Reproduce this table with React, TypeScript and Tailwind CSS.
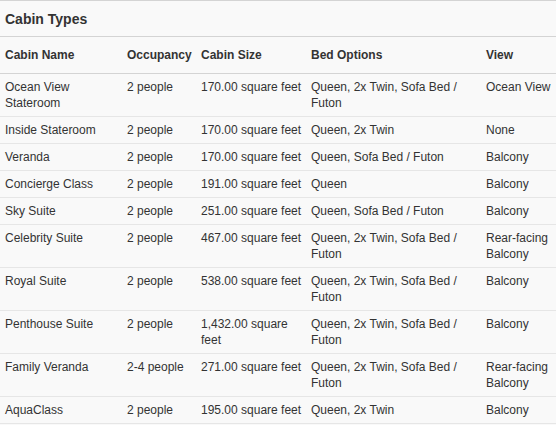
const cabins = [
  { name: "Ocean View Stateroom", occupancy: "2 people", size: "170.00 square feet", beds: "Queen, 2x Twin, Sofa Bed / Futon", view: "Ocean View" },
  { name: "Inside Stateroom", occupancy: "2 people", size: "170.00 square feet", beds: "Queen, 2x Twin", view: "None" },
  { name: "Veranda", occupancy: "2 people", size: "170.00 square feet", beds: "Queen, Sofa Bed / Futon", view: "Balcony" },
  { name: "Concierge Class", occupancy: "2 people", size: "191.00 square feet", beds: "Queen", view: "Balcony" },
  { name: "Sky Suite", occupancy: "2 people", size: "251.00 square feet", beds: "Queen, Sofa Bed / Futon", view: "Balcony" },
  { name: "Celebrity Suite", occupancy: "2 people", size: "467.00 square feet", beds: "Queen, 2x Twin, Sofa Bed / Futon", view: "Rear-facing Balcony" },
  { name: "Royal Suite", occupancy: "2 people", size: "538.00 square feet", beds: "Queen, 2x Twin, Sofa Bed / Futon", view: "Balcony" },
  { name: "Penthouse Suite", occupancy: "2 people", size: "1,432.00 square feet", beds: "Queen, 2x Twin, Sofa Bed / Futon", view: "Balcony" },
  { name: "Family Veranda", occupancy: "2-4 people", size: "271.00 square feet", beds: "Queen, 2x Twin, Sofa Bed / Futon", view: "Rear-facing Balcony" },
  { name: "AquaClass", occupancy: "2 people", size: "195.00 square feet", beds: "Queen, 2x Twin", view: "Balcony" },
];

export default function App() {
  return (
    <div className="min-h-[425px] w-[556px] overflow-hidden border-t border-[#d4d4d4] bg-[#f9f9f9] font-['Liberation_Sans',Arial,sans-serif] text-[12px] leading-4 text-[#333]">
      <h2 className="h-9 border-b border-[#d4d4d4] px-[5px] pt-[10px] text-[14px] font-bold leading-4 text-[#333]">Cabin Types</h2>
      <table className="w-full table-fixed border-collapse text-left">
        <colgroup>
          <col className="w-[122px]" />
          <col className="w-[74px]" />
          <col className="w-[110px]" />
          <col className="w-[175px]" />
          <col className="w-[75px]" />
        </colgroup>
        <thead>
          <tr className="border-b border-[#d4d4d4]">
            <th className="h-9 px-[5px] py-0 font-bold">Cabin Name</th>
            <th className="px-[5px] py-0 font-bold">Occupancy</th>
            <th className="px-[5px] py-0 font-bold">Cabin Size</th>
            <th className="px-[5px] py-0 font-bold">Bed Options</th>
            <th className="px-[5px] py-0 font-bold">View</th>
          </tr>
        </thead>
        <tbody>
          {cabins.map((cabin) => (
            <tr key={cabin.name} className="border-b border-[#e6e6e6] align-top">
              <td className="px-[5px] py-[5px]">{cabin.name}</td>
              <td className="px-[5px] py-[5px]">{cabin.occupancy}</td>
              <td className="py-[5px] pl-[5px] pr-[1px]">{cabin.size}</td>
              <td className="px-[5px] py-[5px]">{cabin.beds}</td>
              <td className="py-[5px] pl-[5px] pr-0">{cabin.view}</td>
            </tr>
          ))}
        </tbody>
      </table>
    </div>
  );
}
